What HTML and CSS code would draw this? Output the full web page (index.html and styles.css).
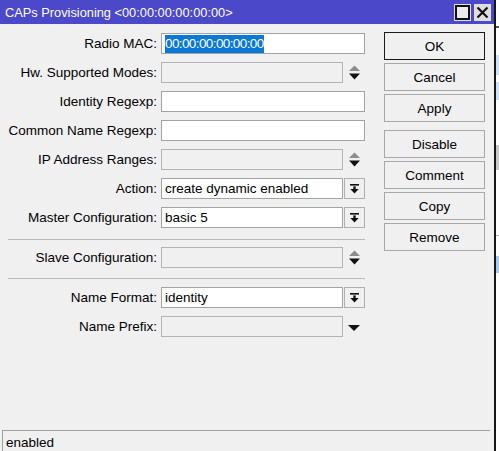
FILE: index.html
```html
<!DOCTYPE html>
<html>
<head>
<meta charset="utf-8">
<link rel="stylesheet" href="styles.css">
</head>
<body>
<div class="screen">
  <div class="window">
    <div class="titlebar">
      <span class="title">CAPs Provisioning &lt;00:00:00:00:00:00&gt;</span>
      <div class="title-btns">
        <span class="tb"><span class="tb-max"></span></span>
        <span class="tb">
          <svg width="13" height="13" viewBox="0 0 13 13"><path d="M1.5 1.5 L11.5 11.5 M11.5 1.5 L1.5 11.5" stroke="#111" stroke-width="2.2" fill="none"/></svg>
        </span>
      </div>
    </div>

    <div class="body">
      <div class="form">
        <div class="row">
          <label class="lbl">Radio MAC:</label>
          <div class="field wide"><span class="sel">00:00:00:00:00:00</span></div>
        </div>
        <div class="row">
          <label class="lbl">Hw. Supported Modes:</label>
          <div class="field narrow off"></div>
          <span class="slot"><svg class="updown" width="11" height="15" viewBox="0 0 11 15"><path d="M0 6 L5.5 0.5 L11 6 Z" fill="#8c8c8c"/><path d="M0 8.5 L11 8.5 L5.5 14.5 Z" fill="#111"/></svg></span>
        </div>
        <div class="row">
          <label class="lbl">Identity Regexp:</label>
          <div class="field wide"></div>
        </div>
        <div class="row">
          <label class="lbl">Common Name Regexp:</label>
          <div class="field wide"></div>
        </div>
        <div class="row">
          <label class="lbl">IP Address Ranges:</label>
          <div class="field narrow off"></div>
          <span class="slot"><svg class="updown" width="11" height="15" viewBox="0 0 11 15"><path d="M0 6 L5.5 0.5 L11 6 Z" fill="#8c8c8c"/><path d="M0 8.5 L11 8.5 L5.5 14.5 Z" fill="#111"/></svg></span>
        </div>
        <div class="row">
          <label class="lbl">Action:</label>
          <div class="field narrow">create dynamic enabled</div>
          <span class="drop"><svg width="9" height="10" viewBox="0 0 9 10"><rect x="0" y="0" width="9" height="1.6" fill="#111"/><rect x="3.3" y="2.4" width="2.4" height="3" fill="#111"/><path d="M0.3 5 L8.7 5 L4.5 9.6 Z" fill="#111"/></svg></span>
        </div>
        <div class="row">
          <label class="lbl">Master Configuration:</label>
          <div class="field narrow">basic 5</div>
          <span class="drop"><svg width="9" height="10" viewBox="0 0 9 10"><rect x="0" y="0" width="9" height="1.6" fill="#111"/><rect x="3.3" y="2.4" width="2.4" height="3" fill="#111"/><path d="M0.3 5 L8.7 5 L4.5 9.6 Z" fill="#111"/></svg></span>
        </div>

        <div class="sep sep-a"></div>

        <div class="row">
          <label class="lbl">Slave Configuration:</label>
          <div class="field narrow off"></div>
          <span class="slot"><svg class="updown" width="11" height="15" viewBox="0 0 11 15"><path d="M0 6 L5.5 0.5 L11 6 Z" fill="#8c8c8c"/><path d="M0 8.5 L11 8.5 L5.5 14.5 Z" fill="#111"/></svg></span>
        </div>

        <div class="sep sep-b"></div>

        <div class="row">
          <label class="lbl">Name Format:</label>
          <div class="field narrow">identity</div>
          <span class="drop"><svg width="9" height="10" viewBox="0 0 9 10"><rect x="0" y="0" width="9" height="1.6" fill="#111"/><rect x="3.3" y="2.4" width="2.4" height="3" fill="#111"/><path d="M0.3 5 L8.7 5 L4.5 9.6 Z" fill="#111"/></svg></span>
        </div>
        <div class="row">
          <label class="lbl">Name Prefix:</label>
          <div class="field narrow off"></div>
          <span class="slot"><svg class="tri" width="12" height="6" viewBox="0 0 12 6"><path d="M0 0 L12 0 L6 6 Z" fill="#111"/></svg></span>
        </div>
      </div>

      <div class="actions">
        <button class="btn default">OK</button>
        <button class="btn">Cancel</button>
        <button class="btn">Apply</button>
        <button class="btn group">Disable</button>
        <button class="btn">Comment</button>
        <button class="btn">Copy</button>
        <button class="btn">Remove</button>
      </div>
    </div>

    <div class="status">
      <div class="status-cell">enabled</div>
    </div>
  </div>

  <div class="backdrop">
    <div class="bd-line"></div>
    <div class="bd-blue bd-b1"></div>
    <div class="bd-blue bd-b2"></div>
    <div class="bd-gray"></div>
    <div class="bd-rule"></div>
    <div class="bd-blue bd-b3"></div>
  </div>
</div>
</body>
</html>
```

FILE: styles.css
```css
html, body {
  margin: 0;
  padding: 0;
  background: #ffffff;
}

.screen {
  display: flex;
  width: 499px;
  height: 451px;
  overflow: hidden;
  font-family: "Liberation Sans", Arial, sans-serif;
  font-size: 13.5px;
  color: #000;
}

/* dialog window */
.window {
  width: 494px;
  height: 451px;
  flex: none;
  display: flex;
  flex-direction: column;
  background: #f0f0f0;
  border-right: 2px solid #151515;
}

.titlebar {
  height: 24px;
  flex: none;
  display: flex;
  align-items: center;
  justify-content: space-between;
  background: #4b48c9;
  color: #fff;
  padding-left: 5px;
}

.title {
  font-size: 12.8px;
  margin-top: 1px;
}

.title-btns {
  display: flex;
  gap: 3px;
  margin-right: 3px;
  margin-top: 1px;
}

.tb {
  width: 17px;
  height: 17px;
  background: #dedede;
  display: flex;
  align-items: center;
  justify-content: center;
}

.tb-max {
  width: 11px;
  height: 11px;
  border: 2px solid #111;
  background: #ececec;
}

.body {
  flex: 1;
  display: flex;
  padding-top: 8px;
}

/* field column */
.form {
  width: 365px;
  margin-top: 1px;
  display: flex;
  flex-direction: column;
}

.row {
  height: 21px;
  margin-bottom: 8px;
  display: flex;
  align-items: center;
}

.lbl {
  width: 157px;
  flex: none;
  text-align: right;
  margin-right: 4px;
  white-space: nowrap;
}

.field {
  height: 21px;
  box-sizing: border-box;
  border: 1px solid #a3a3a3;
  background: #fff;
  display: flex;
  align-items: center;
  padding-left: 3px;
  white-space: nowrap;
  overflow: hidden;
}

.field.wide { width: 204px; }
.field.narrow { width: 182px; }

.field.off {
  background: #f0f0f0;
  border-color: #b4b4b4;
}

.sel {
  background: #0a78d7;
  color: #fff;
  padding: 1px 0;
  line-height: 16px;
  letter-spacing: -0.6px;
}

.slot {
  width: 22px;
  height: 21px;
  display: flex;
  align-items: center;
  justify-content: center;
}

.tri { margin-top: 2px; }

.drop {
  width: 21px;
  height: 21px;
  box-sizing: border-box;
  margin-left: 1px;
  border: 1px solid #b0b0b0;
  background: #f0f0f0;
  display: flex;
  align-items: center;
  justify-content: center;
}

.sep {
  height: 1px;
  background: #b9b9b9;
  margin-left: 8px;
  width: 357px;
}

.sep-a { margin-top: 3px; margin-bottom: 7px; }
.sep-b { margin-top: 2px; margin-bottom: 8px; }

/* button column */
.actions {
  margin-left: 19px;
  display: flex;
  flex-direction: column;
  gap: 3px;
}

.btn {
  width: 101px;
  height: 28px;
  box-sizing: border-box;
  border: 1px solid #a8a8a8;
  background: #f0f0f0;
  font-family: inherit;
  font-size: 13.5px;
  color: #000;
  padding: 0;
}

.btn.default { border-color: #1a1a1a; }
.btn.group { margin-top: 5px; }

/* status strip */
.status {
  height: 21px;
  flex: none;
  padding-left: 2px;
  padding-right: 4px;
}

.status-cell {
  height: 100%;
  box-sizing: border-box;
  border-top: 1px solid #a0a0a0;
  border-left: 1px solid #a0a0a0;
  padding-left: 3px;
  padding-top: 4px;
  font-size: 13.5px;
}

/* application visible behind the dialog */
.backdrop {
  flex: 1;
  position: relative;
  background: #ffffff;
}

.bd-line, .bd-blue, .bd-gray, .bd-rule {
  position: absolute;
  left: 0;
  right: 0;
}

.bd-line { top: 26px; height: 2px; background: #555; }
.bd-blue { background: #cfe2f6; }
.bd-b1 { top: 55px; height: 20px; }
.bd-b2 { top: 82px; height: 18px; }
.bd-gray { top: 145px; height: 25px; background: #c9c9c9; }
.bd-rule { top: 235px; height: 1px; background: #b0b0b0; }
.bd-b3 { top: 256px; height: 17px; background: #a7ccef; }
```
